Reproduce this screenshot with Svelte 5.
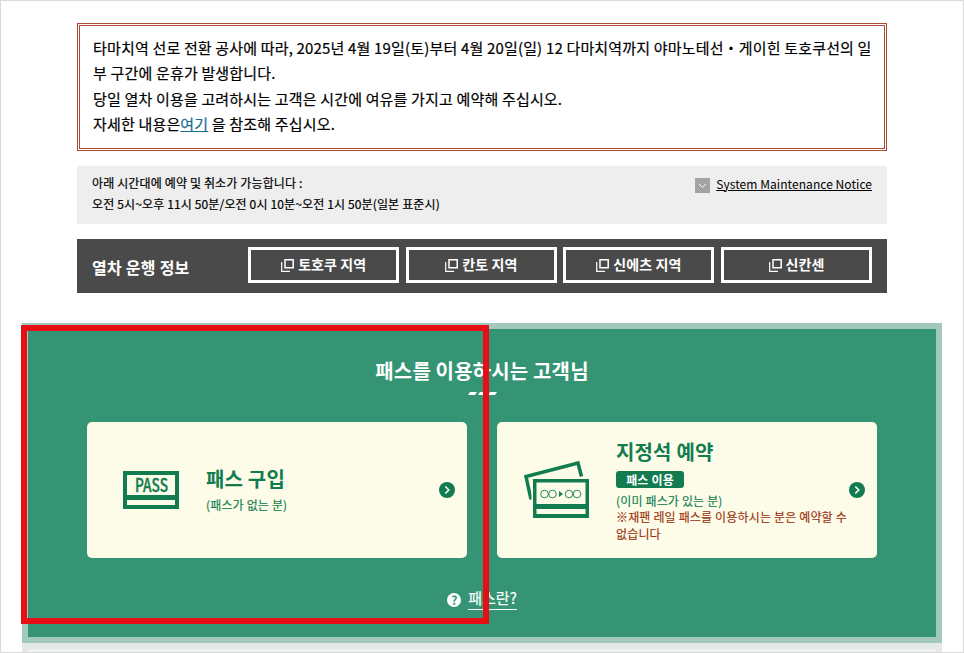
<script lang="ts">
  const areas: string[] = ["토호쿠 지역", "칸토 지역", "신에츠 지역", "신칸센"];
</script>

<div class="page">
  <div class="notice">
    <p>
      타마치역 선로 전환 공사에 따라, 2025년 4월 19일(토)부터 4월 20일(일) 12 다마치역까지 야마노테선・게이힌 토호쿠선의 일<br />
      부 구간에 운휴가 발생합니다.
    </p>
    <p>당일 열차 이용을 고려하시는 고객은 시간에 여유를 가지고 예약해 주십시오.</p>
    <p>자세한 내용은<a href="#notice">여기</a> 을 참조해 주십시오.</p>
  </div>

  <div class="hours">
    <div class="hours-text">
      <p>아래 시간대에 예약 및 취소가 가능합니다 :</p>
      <p>오전 5시~오후 11시 50분/오전 0시 10분~오전 1시 50분(일본 표준시)</p>
    </div>
    <a class="maintenance" href="#maintenance">
      <svg width="15" height="15" viewBox="0 0 15 15">
        <rect width="15" height="15" fill="#a3a3a3" />
        <path d="M4 6l3.5 3.5L11 6" fill="none" stroke="#fff" />
      </svg>
      <span>System Maintenance Notice</span>
    </a>
  </div>

  <div class="operation">
    <h2>열차 운행 정보</h2>
    <div class="areas">
      {#each areas as area}
        <a class="area" href="#area">
          <svg width="13" height="13" viewBox="0 0 13 13" fill="none" stroke="#fff">
            <path d="M4 .8h8.2v8H4z" stroke-width="1.5" />
            <path d="M.7 3v9.3H9" stroke-width="1.2" />
          </svg>
          <span>{area}</span>
        </a>
      {/each}
    </div>
  </div>

  <section class="pass">
    <h3>패스를 이용하시는 고객님</h3>
    <svg class="dashes" width="30" height="4" viewBox="0 0 30 4" fill="#fff">
      <path d="M3 0h7L8 3H1zM13 0h7l-2 3h-7zM23 0h7l-2 3h-7z" />
    </svg>

    <div class="cards">
      <a class="card" href="#buy">
        <div class="picture">
          <svg width="56" height="38" viewBox="0 0 56 38">
            <rect width="56" height="38" fill="#127c50" />
            <path d="M4 4h48v20H4zM4 29h48v5H4z" fill="#fcfce8" />
            <text x="28.5" y="20.5" text-anchor="middle" textLength="33" lengthAdjust="spacingAndGlyphs">PASS</text>
          </svg>
        </div>
        <div class="body buy">
          <h4>패스 구입</h4>
          <p>(패스가 없는 분)</p>
        </div>
        <svg class="arrow" width="16" height="16" viewBox="0 0 16 16">
          <circle cx="8" cy="8" r="8" fill="#127c50" />
          <path d="M6.3 4.5L9.8 8l-3.5 3.5" fill="none" stroke="#fff" stroke-width="1.6" />
        </svg>
      </a>

      <a class="card" href="#reserve">
        <div class="picture tickets">
          <svg width="65" height="57" viewBox="0 0 65 57">
            <path d="M7 38.5L2 15.5L54 2L57.5 15.5" fill="none" stroke="#127c50" stroke-width="3.5" />
            <path d="M7.5 16.5H65V57H7.5z" fill="#fcfce8" />
            <rect x="9" y="18" width="56" height="39" fill="#127c50" />
            <path d="M12.5 21.5h49V43h-49zM12.5 48h49v5h-49z" fill="#fcfce8" />
            <g fill="none" stroke="#127c50" stroke-width=".9">
              <circle cx="20.5" cy="33" r="3.8" />
              <circle cx="28.5" cy="33" r="3.8" />
              <circle cx="45" cy="33" r="3.8" />
              <circle cx="53" cy="33" r="3.8" />
            </g>
            <path d="M35 30l4 3-4 3z" fill="#127c50" />
          </svg>
        </div>
        <div class="body reserve">
          <h4>지정석 예약</h4>
          <span class="badge">패스 이용</span>
          <p class="has-pass">(이미 패스가 있는 분)</p>
          <p class="caution">※재팬 레일 패스를 이용하시는 분은 예약할 수<br />없습니다</p>
        </div>
        <svg class="arrow" width="16" height="16" viewBox="0 0 16 16">
          <circle cx="8" cy="8" r="8" fill="#127c50" />
          <path d="M6.3 4.5L9.8 8l-3.5 3.5" fill="none" stroke="#fff" stroke-width="1.6" />
        </svg>
      </a>
    </div>

    <a class="about" href="#about">
      <span class="question">?</span>
      <span class="about-text">패스란?</span>
    </a>
    <div class="highlight"></div>
  </section>
  <div class="next"></div>
</div>

<style>
  :global(body) {
    font-family: "Noto Sans CJK KR", sans-serif;
    color: #000;
    background: #fff;
  }

  p,
  h2,
  h3,
  h4 {
    margin: 0;
  }

  a {
    color: inherit;
    text-decoration: none;
  }

  svg {
    display: block;
    flex: none;
  }

  .page {
    box-sizing: border-box;
    height: 653px;
    overflow: hidden;
    border: 1px solid #d9d9d9;
    padding: 22px 21px 0;
  }

  .notice,
  .hours,
  .operation {
    box-sizing: border-box;
    width: 810px;
    margin-left: 55px;
    white-space: nowrap;
  }

  .notice,
  .hours-text {
    -webkit-text-stroke: 0.2px;
  }

  .notice {
    height: 128px;
    border: 3px double #ad4a38;
    padding: 9px 13px;
    font-size: 15px;
    letter-spacing: 0.17px;
    line-height: 25.3px;
  }

  .notice a {
    color: #1c6b96;
    text-decoration: underline;
  }

  .hours {
    display: flex;
    justify-content: space-between;
    height: 58px;
    margin-top: 15px;
    padding: 6px 15px 0;
    background: #eee;
    font-size: 12px;
    letter-spacing: 0.14px;
    line-height: 21px;
  }

  .maintenance {
    display: flex;
    gap: 6px;
    height: 24px;
    align-items: center;
    letter-spacing: 0.06px;
  }

  .maintenance span {
    margin-top: -1px;
    text-decoration: underline;
    text-decoration-thickness: 1px;
  }

  .maintenance svg {
    margin-top: 2px;
  }

  .operation {
    display: flex;
    justify-content: space-between;
    height: 54px;
    margin-top: 15px;
    padding: 8px 15px 0;
    background: #4a4a4a;
    color: #fff;
  }

  h2 {
    font-size: 16px;
    letter-spacing: 0.25px;
    line-height: 41px;
  }

  .areas {
    display: flex;
    gap: 6.6px;
  }

  .area {
    box-sizing: border-box;
    display: flex;
    align-items: center;
    justify-content: center;
    gap: 4px;
    width: 151px;
    height: 36px;
    border: 3px solid #fff;
    font-size: 14px;
    font-weight: bold;
    letter-spacing: 0.1px;
    line-height: 28px;
  }

  .area span {
    margin-top: -2px;
  }

  .pass {
    position: relative;
    box-sizing: border-box;
    display: flex;
    flex-direction: column;
    align-items: center;
    height: 320px;
    margin-top: 30px;
    border: 6px solid #a2c9bb;
    padding-top: 26px;
    background: #349474;
    color: #fff;
  }

  h3 {
    font-size: 20px;
    letter-spacing: 0.15px;
    line-height: 32px;
  }

  .dashes {
    margin-top: 5px;
  }

  .cards {
    display: flex;
    gap: 30px;
    margin-top: 26px;
  }

  .card {
    box-sizing: border-box;
    display: flex;
    align-items: center;
    width: 380px;
    height: 136px;
    border-radius: 5px;
    padding: 0 12px 0 36px;
    background: #fcfce8;
    color: #127c50;
    font-size: 12px;
    letter-spacing: 0.16px;
    white-space: nowrap;
  }

  .picture {
    width: 83px;
  }

  .picture text {
    fill: #127c50;
    stroke: #127c50;
    stroke-width: 0.4px;
    font-family: "Noto Sans CJK KR", sans-serif;
    font-size: 18px;
    font-weight: 500;
    letter-spacing: 0;
  }

  .tickets {
    width: 92px;
    margin-top: -2px;
    margin-left: -9px;
  }

  .body {
    flex: 1;
    line-height: 16.5px;
  }

  .buy {
    padding-bottom: 3px;
  }

  .buy p {
    margin-top: 2px;
  }

  .reserve {
    padding-bottom: 2px;
  }

  .body p {
    -webkit-text-stroke: 0.15px;
  }

  h4 {
    font-size: 20px;
    line-height: 32px;
  }

  .badge {
    display: block;
    width: 68px;
    height: 17px;
    margin-top: 3px;
    border-radius: 3px;
    background: #127c50;
    color: #fff;
    font-weight: bold;
    line-height: 17px;
    text-align: center;
  }

  .has-pass {
    margin-top: 5px;
  }

  .caution {
    color: #9c3210;
  }

  .about {
    display: flex;
    align-items: center;
    gap: 7px;
    margin-top: 29px;
    font-size: 15px;
    line-height: 22px;
  }

  .question {
    width: 14px;
    height: 14px;
    margin-top: 2px;
    border-radius: 50%;
    background: #fff;
    color: #349474;
    font-size: 12px;
    font-weight: bold;
    line-height: 14px;
    text-align: center;
  }

  .about-text {
    border-bottom: 1px solid #fff;
    -webkit-text-stroke: 0.2px;
  }

  /* red frame over the left half of the section */
  .highlight {
    position: absolute;
    top: -4px;
    left: -7px;
    box-sizing: border-box;
    width: 468px;
    height: 299px;
    border: 6px solid #e60f16;
  }

  .next {
    height: 20px;
    border: 6px solid #e4e8e8;
    border-bottom: 0;
    background: #f0f3f3;
  }
</style>
